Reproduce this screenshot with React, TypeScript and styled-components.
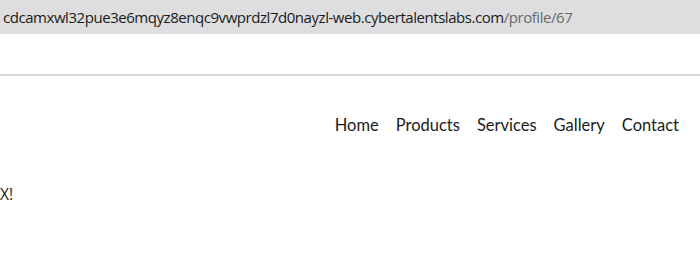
import React from "react";
import styled, { createGlobalStyle } from "styled-components";

const Global = createGlobalStyle`
  html, body { margin: 0; padding: 0; background: #ffffff; }
  body { width: 700px; height: 253px; overflow: hidden; }
`;

const Page = styled.div`
  display: flex;
  flex-direction: column;
  width: 700px;
  height: 253px;
  background: #ffffff;
`;

const AddressBar = styled.div`
  height: 34px;
  background: #dedee0;
  display: flex;
  align-items: center;
  padding-left: 3px;
  font-family: "Open Sans", "Noto Sans", sans-serif;
  font-size: 15px;
  letter-spacing: -0.45px;
  color: #1a1a1a;
  white-space: nowrap;
`;

const Path = styled.span`
  color: #6b6b6b;
`;

const Header = styled.div`
  height: 40px;
  border-bottom: 2px solid #d9d9d9;
`;

const NavRow = styled.nav`
  display: flex;
  justify-content: flex-end;
  gap: 17px;
  padding: 39px 21px 0 0;
  font-family: Lato, sans-serif;
  font-size: 16.5px;
  color: #1c1c1c;
`;

const NavLink = styled.a`
  color: inherit;
  text-decoration: none;
`;

const Body = styled.div`
  padding-top: 48px;
  font-family: "Open Sans", "Noto Sans", sans-serif;
  font-size: 15.5px;
  color: #1a1a1a;
`;

export default function App() {
  return (
    <Page>
      <Global />
      <AddressBar>
        cdcamxwl32pue3e6mqyz8enqc9vwprdzl7d0nayzl-web.cybertalentslabs.com
        <Path>/profile/67</Path>
      </AddressBar>
      <Header />
      <NavRow>
        {["Home", "Products", "Services", "Gallery", "Contact"].map((n) => (
          <NavLink key={n}>{n}</NavLink>
        ))}
      </NavRow>
      <Body>X!</Body>
    </Page>
  );
}
